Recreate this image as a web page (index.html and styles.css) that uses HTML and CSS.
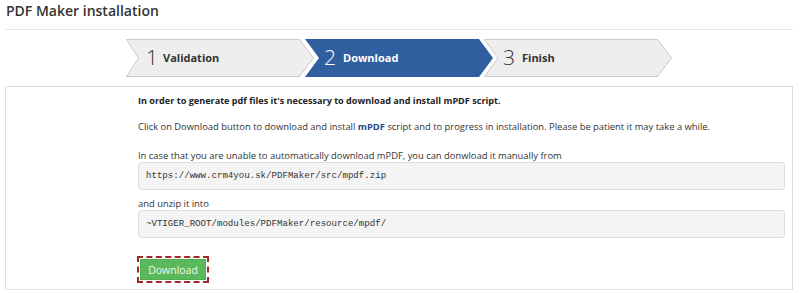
FILE: index.html
```html
<!DOCTYPE html>
<html lang="en">
<head>
    <meta charset="UTF-8">
    <title>PDF Maker installation</title>
    <link rel="stylesheet" href="styles.css">
</head>
<body>
    <div class="page">
        <h1 class="title">PDF Maker installation</h1>
        <div class="steps">
            <div class="step">
                <svg class="shape" width="188" height="38" viewBox="0 0 188 38"><polygon points="0.5,0.5 173.5,0.5 187.5,19 173.5,37.5 0.5,37.5 12.5,19" fill="#eeeeee" stroke="#c9c9c9"/></svg>
                <div class="label"><span class="num">1</span><span class="name">Validation</span></div>
            </div>
            <div class="step active">
                <svg class="shape" width="188" height="38" viewBox="0 0 188 38"><polygon points="0,0 174,0 188,19 174,38 0,38 14,19" fill="#2f5f9f"/></svg>
                <div class="label"><span class="num">2</span><span class="name">Download</span></div>
            </div>
            <div class="step">
                <svg class="shape" width="188" height="38" viewBox="0 0 188 38"><polygon points="0.5,0.5 173.5,0.5 187.5,19 173.5,37.5 0.5,37.5 14,19" fill="#eeeeee" stroke="#c9c9c9"/></svg>
                <div class="label"><span class="num">3</span><span class="name">Finish</span></div>
            </div>
        </div>
        <div class="content">
            <p class="lead">In order to generate pdf files it's necessary to download and install mPDF script.</p>
            <p class="info">Click on Download button to download and install <b class="hl">mPDF</b> script and to progress in installation. Please be patient it may take a while.</p>
            <p class="caption">In case that you are unable to automatically download mPDF, you can donwload it manually from</p>
            <pre class="path">https://www.crm4you.sk/PDFMaker/src/mpdf.zip</pre>
            <p class="caption second">and unzip it into</p>
            <pre class="path">~VTIGER_ROOT/modules/PDFMaker/resource/mpdf/</pre>
            <button class="btn-download" type="button">Download</button>
        </div>
    </div>
</body>
</html>
```

FILE: styles.css
```css
* { margin: 0; padding: 0; box-sizing: border-box; }
body { font-family: 'Open Sans', 'Liberation Sans', sans-serif; color: #333; background: #fff; }
.page { padding: 0 7px 0 5px; }
.title { font-size: 14px; font-weight: 600; line-height: 20px; padding: 1px 1px 0; height: 30px; border-bottom: 1px solid #e6e6e6; color: #333; }
.steps { display: flex; margin-top: 9px; padding-left: 121px; height: 38px; }
.step { display: grid; width: 188px; height: 38px; }
.step + .step { margin-left: -9px; }
.step .shape, .step .label { grid-area: 1 / 1; }
.step .label { display: flex; align-items: center; padding-left: 19px; padding-bottom: 1px; color: #333; }
.step:first-child .label { padding-left: 20px; }
.step .num { font-size: 21px; font-weight: 300; width: 19px; line-height: 1; }
.step:first-child .num { width: 17px; }
.step .name { font-size: 11px; font-weight: 700; }
.step.active .label { color: #fff; }
.content { margin-top: 9px; border: 1px solid #dedede; border-bottom-color: #e4e4e4; height: 204px; padding: 7px 7px 0 132px; font-size: 9.4px; line-height: 13px; }
.lead { font-weight: 700; font-size: 9.1px; color: #222; margin-bottom: 13px; }
.info { margin-bottom: 16px; }
.hl { color: #1f4b8a; }
.caption.second { margin-top: 7px; }
.path { font-family: 'Liberation Mono', monospace; font-size: 9.1px; line-height: 26px; height: 28px; padding: 0 7px; background: #f4f4f4; border: 1px solid #dcdcdc; border-radius: 3px; color: #333; }
.btn-download { display: block; margin: 21px 0 0 2px; width: 66px; height: 21px; background: #5cb85c; border: 1px solid #4cae4c; color: #eef8ee; font-family: 'Open Sans', 'Liberation Sans', sans-serif; font-size: 10.5px; outline: 2px dashed #a12626; outline-offset: 1px; }
```
